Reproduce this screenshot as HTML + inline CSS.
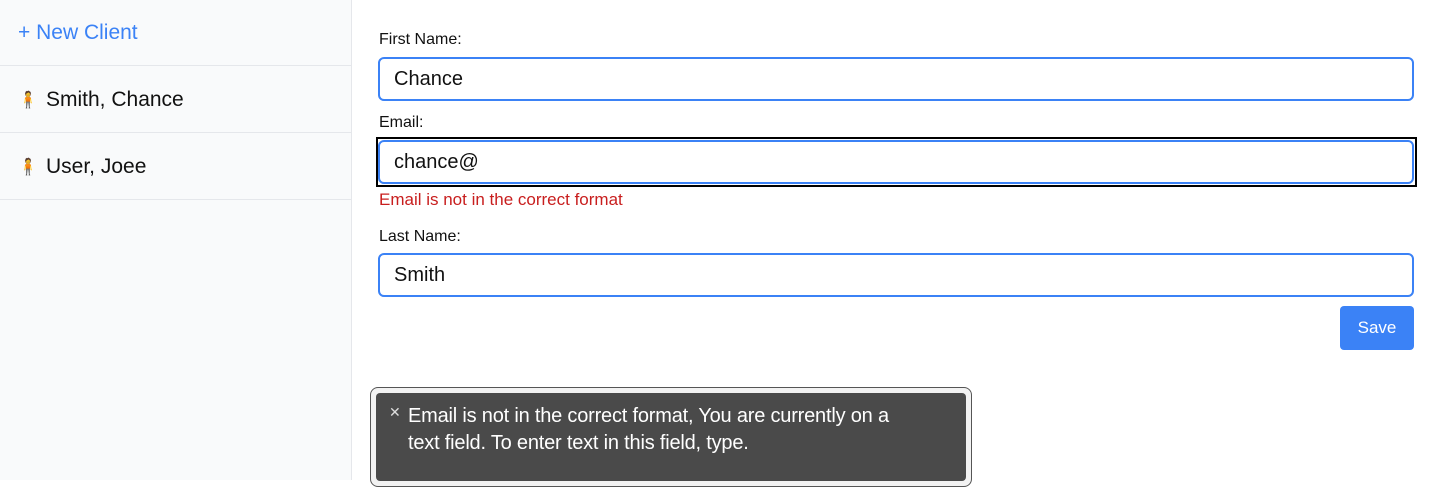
<!DOCTYPE html>
<html><head><meta charset="utf-8"><style>
*{box-sizing:border-box;margin:0;padding:0}
body{width:1436px;height:480px;overflow:hidden;background:#fff;font-family:"Liberation Sans",Arial,sans-serif;position:relative}
.side{position:absolute;left:0;top:0;width:352px;height:480px;background:#f9fafb;border-right:1px solid #e5e7eb}
.row{position:absolute;left:0;width:351px;border-bottom:1px solid #e5e7eb;height:67px;font-size:21px;color:#111;display:flex;align-items:center;padding-left:18px}
.new{top:0;height:66px;color:#3b82f6;font-size:21px}
.man{font-size:16px;margin-right:8px;display:inline-block;width:20px;text-align:center}
.lbl{position:absolute;left:379px;font-size:16px;color:#111}
.inp{position:absolute;left:378px;width:1036px;height:44px;border:2px solid #3b82f6;border-radius:6px;font-size:20px;color:#111;padding-left:14px;display:flex;align-items:center}
.err{position:absolute;left:379px;top:190px;font-size:17px;color:#c81e1e}
.save{position:absolute;left:1340px;top:306px;width:74px;height:44px;background:#3b82f6;border-radius:4px;color:#fff;font-size:17px;display:flex;align-items:center;justify-content:center}
.tipo{position:absolute;left:370px;top:387px;width:602px;height:100px;border:1px solid #555;border-radius:8px;background:#f2f2f2;padding:5px}
.tipi{background:#4a4a4a;width:100%;height:100%;border-radius:4px;color:#fff;font-size:20px;line-height:27px;padding:10px 20px 0 32px;position:relative;letter-spacing:-0.2px;white-space:nowrap}
.x{position:absolute;left:13px;top:6px;font-size:14px;color:#ddd}
</style></head><body>
<div class="side">
<div class="row new">+ New Client</div>
<div class="row" style="top:66px;padding-top:2px"><span class="man">🧍</span>Smith, Chance</div>
<div class="row" style="top:133px;padding-top:2px"><span class="man">🧍</span>User, Joee</div>
</div>
<div class="lbl" style="top:31px">First Name:</div>
<div class="inp" style="top:57px">Chance</div>
<div class="lbl" style="top:114px">Email:</div>
<div style="position:absolute;left:376px;top:137px;width:1041px;height:50px;border:2px solid #000"></div>
<div class="inp" style="top:140px">chance@</div>
<div class="err">Email is not in the correct format</div>
<div class="lbl" style="top:228px">Last Name:</div>
<div class="inp" style="top:253px">Smith</div>
<div class="save">Save</div>
<div class="tipo"><div class="tipi"><span class="x">✕</span>Email is not in the correct format, You are currently on a<br>text field. To enter text in this field, type.</div></div>
</body></html>
